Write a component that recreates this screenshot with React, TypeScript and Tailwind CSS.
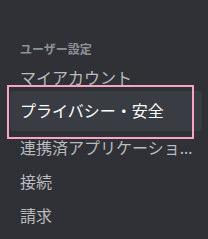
import React from "react";

const items = ["マイアカウント", "プライバシー・安全", "連携済アプリケーション", "接続", "請求"];

export default function App() {
  return (
    <div
      className="relative w-[208px] h-[239px] bg-[#2f3136] overflow-hidden"
      style={{ fontFamily: '"Noto Sans", "Noto Sans CJK JP", sans-serif' }}
    >
      <div className="pt-[42px] pl-[10px] pr-[6px]">
        <div className="pl-[10px] h-[16px] flex items-center text-[12px] font-bold text-[#8e9297] leading-none">
          ユーザー設定
        </div>
        <div className="mt-[3px] flex flex-col">
          {items.map((t, i) => {
            const sel = i === 1;
            return (
              <div
                key={t}
                className={
                  sel
                    ? "-mt-[4px] h-[40px] rounded-[4px] bg-[#393c43] pl-[10px] pr-[7px] flex items-center text-[16px] text-white"
                    : "h-[34px] pl-[10px] pr-[7px] flex items-center text-[16px] text-[#b9bbbe]"
                }
              >
                <span className="block min-w-0 truncate leading-[20px]">{t}</span>
              </div>
            );
          })}
        </div>
      </div>
      <div className="absolute left-[7px] top-[85px] w-[187px] h-[54px] border-2 border-[#f4a6c6] pointer-events-none" />
    </div>
  );
}
